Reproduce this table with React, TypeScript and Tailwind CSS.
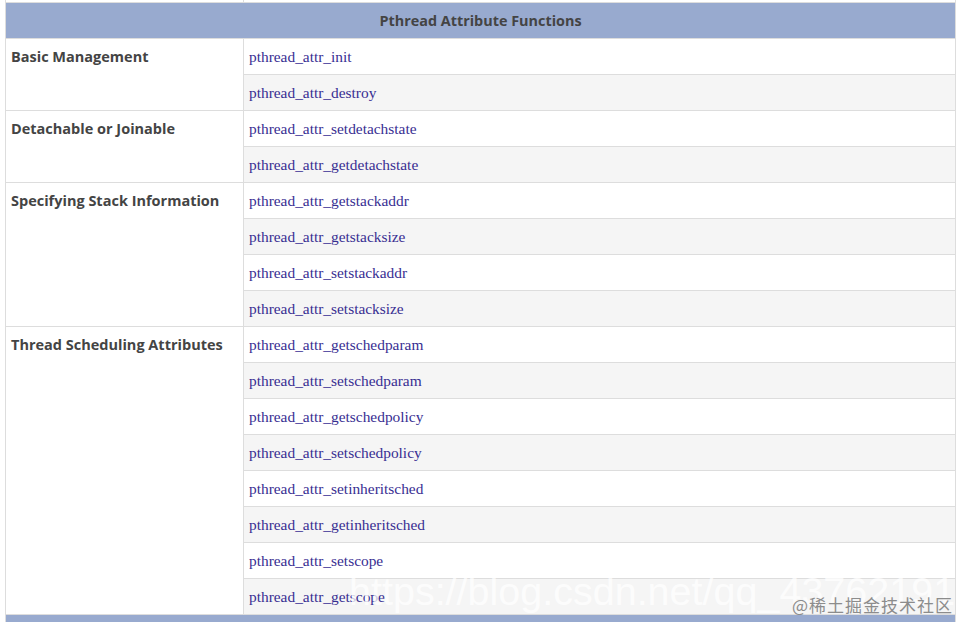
import React from "react";

const groups: { title: string; items: string[] }[] = [
  { title: "Basic Management", items: ["pthread_attr_init", "pthread_attr_destroy"] },
  { title: "Detachable or Joinable", items: ["pthread_attr_setdetachstate", "pthread_attr_getdetachstate"] },
  {
    title: "Specifying Stack Information",
    items: ["pthread_attr_getstackaddr", "pthread_attr_getstacksize", "pthread_attr_setstackaddr", "pthread_attr_setstacksize"],
  },
  {
    title: "Thread Scheduling Attributes",
    items: [
      "pthread_attr_getschedparam",
      "pthread_attr_setschedparam",
      "pthread_attr_getschedpolicy",
      "pthread_attr_setschedpolicy",
      "pthread_attr_setinheritsched",
      "pthread_attr_getinheritsched",
      "pthread_attr_setscope",
      "pthread_attr_getscope",
    ],
  },
];

const sans = { fontFamily: '"Open Sans", "Noto Sans", sans-serif' };
const serif = { fontFamily: '"Liberation Serif", "Times New Roman", serif' };

export default function App() {
  let idx = 0;
  return (
    <div className="relative w-[959px] h-[622px] overflow-hidden bg-white">
      <div className="ml-[5px] w-[951px] border-x border-[#dddddd]">
        {/* stub of previous row */}
        <div className="flex h-[2px]">
          <div className="w-[238px] border-r border-[#dddddd]" />
          <div className="flex-1" />
        </div>
        {/* header */}
        <div className="border-t border-[#dddddd]">
          <div
            className="h-[35px] bg-[#98aacf] flex items-center justify-center text-[14.4px] font-bold text-[#444444]"
            style={sans}
          >
            Pthread Attribute Functions
          </div>
        </div>
        {groups.map((g) => (
          <div key={g.title} className="flex border-t border-[#dddddd]">
            <div
              className="w-[238px] shrink-0 border-r border-[#dddddd] bg-white pl-[5px] pt-[8px] text-[14.5px] leading-[20px] font-bold text-[#444444]"
              style={sans}
            >
              {g.title}
            </div>
            <div className="flex-1 flex flex-col">
              {g.items.map((it, j) => {
                const odd = idx++ % 2 === 1;
                return (
                  <div
                    key={it}
                    className={
                      "h-[35px] flex items-center pl-[5px] text-[15.4px] text-[#382e92] " +
                      (j > 0 ? "box-content border-t border-[#dddddd] " : "") +
                      (odd ? "bg-[#f5f5f5]" : "bg-white")
                    }
                    style={serif}
                  >
                    {it}
                  </div>
                );
              })}
            </div>
          </div>
        ))}
        <div className="border-t border-[#dddddd]">
          <div className="h-[20px] bg-[#98aacf]" />
        </div>
      </div>
      {/* watermark */}
      <div
        className="absolute left-[349px] top-[567px] text-[39.5px] leading-[48px] text-white/75 whitespace-nowrap pointer-events-none"
        style={{ fontFamily: '"Liberation Sans", Arial, sans-serif' }}
      >
        https://blog.csdn.net/qq_43762191
      </div>
      <div
        className="absolute left-[792px] top-[593px] text-[17px] leading-[24px] text-[#8c8c8c] whitespace-nowrap pointer-events-none tracking-[1px]"
        style={{ fontFamily: '"Noto Sans CJK SC", sans-serif' }}
      >
        @稀土掘金技术社区
      </div>
    </div>
  );
}
